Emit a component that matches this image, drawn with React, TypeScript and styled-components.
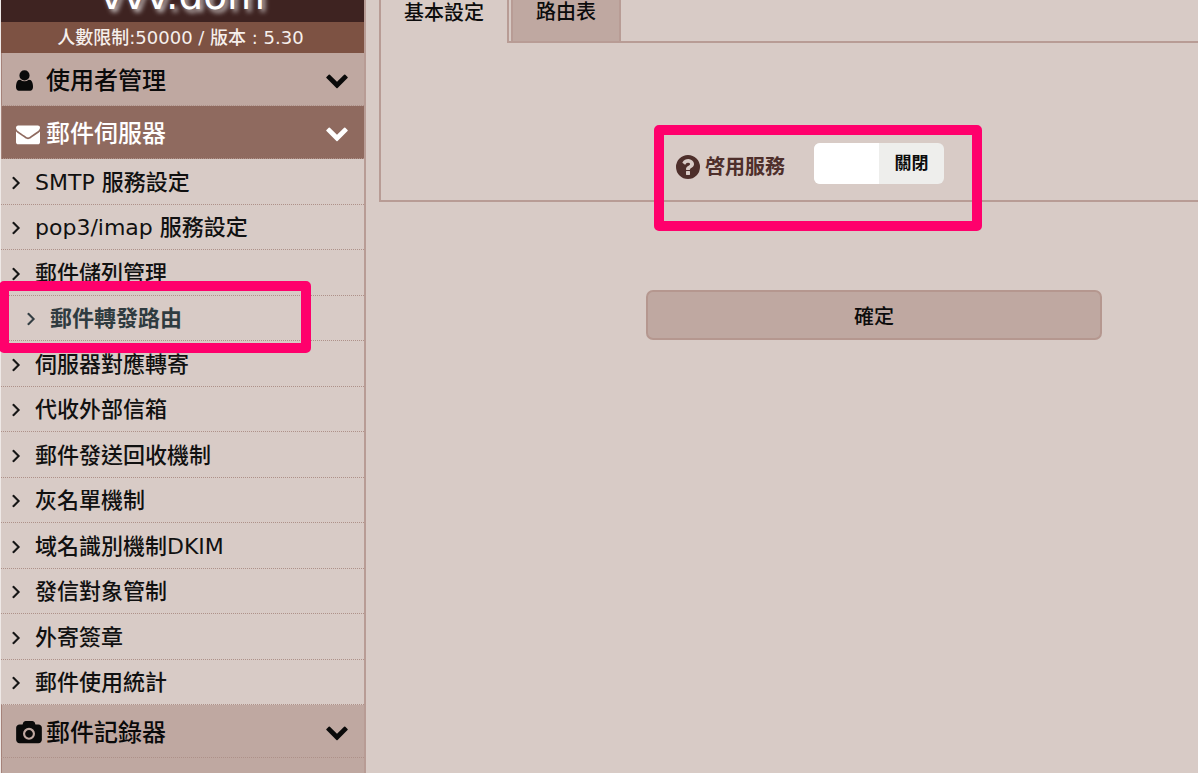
import React from "react";
import styled, { createGlobalStyle, css } from "styled-components";

const c = {
  bg: "#d8cbc6",
  row: "#bfa8a1",
  active: "#8f6a5f",
  line: "#b89c95",
  dots: "#ae9189",
  dark: "#3e2321",
  brown: "#7d5243",
  label: "#4e2f2b",
  mark: "#ff006c",
};

const Global = createGlobalStyle`
  * { box-sizing: border-box; }
  html { overflow: hidden; background: #fff; }
  body { margin: 0; font-family: "DejaVu Sans", "Noto Sans CJK TC", sans-serif; font-weight: 500; color: #0c0c0c; }
  ul { list-style: none; margin: 0; padding: 0; }
  button { font: inherit; color: inherit; cursor: pointer; }
`;

const Page = styled.div`
  display: flex;
  height: calc(100vh - 4px);
  margin-right: 2px;
  background: ${c.bg};
  overflow: hidden;
`;

const Sidebar = styled.nav`
  flex: none;
  width: 366px;
  border-left: 1px solid #efe9e7;
  border-right: 2px solid ${c.line};
`;

const Brand = styled.div`
  height: 22px;
  display: flex;
  align-items: flex-end;
  justify-content: center;
  padding-bottom: 4px;
  overflow: hidden;
  background: ${c.dark};
  color: #fff;
  font-size: 39px;
  line-height: 44px;
  text-shadow: 3px 3px 5px rgba(255, 255, 255, 0.8);
`;

const Limit = styled.div`
  height: 31px;
  padding-right: 4px;
  background: ${c.brown};
  color: #f6efec;
  font-size: 18px;
  line-height: 31px;
  text-align: center;
`;

const GroupButton = styled.button<{ $active?: boolean }>`
  display: flex;
  align-items: center;
  width: 100%;
  height: 53px;
  padding: 3px 15px 0 14px;
  border: 0;
  border-left: 1px solid #a58279;
  border-bottom: 1px dotted ${c.dots};
  background: ${(p) => (p.$active ? c.active : c.row)};
  && { color: ${(p) => (p.$active ? "#fff" : "#0a0a0a")}; font-size: 24px; }
  text-align: left;
`;

const GroupIcon = styled.span`
  display: flex;
  flex: none;
  width: 30px;
`;

const GroupName = styled.span`
  flex: 1;
  line-height: 32px;
`;

const Menu = styled.ul`
  display: flex;
  flex-direction: column;
  min-height: 546px;
`;

const MenuItem = styled.li`
  position: relative;
  display: flex;
  flex: 1;
  border-bottom: 1px dotted ${c.dots};
`;

const MenuLink = styled.a<{ $current?: boolean }>`
  display: flex;
  align-items: center;
  flex: 1;
  gap: 14px;
  padding: 3px 0 0 ${(p) => (p.$current ? 25 : 10)}px;
  color: ${(p) => (p.$current ? "#2f3b40" : "#111")};
  font-size: 22px;
  font-weight: ${(p) => (p.$current ? 700 : 500)};
  line-height: 30px;
  text-decoration: none;
`;

const mark = css`
  position: absolute;
  border: 10px solid ${c.mark};
  border-radius: 5px;
  pointer-events: none;
  z-index: 1;
`;

const MenuMark = styled.span`
  ${mark}
  left: -2px;
  top: -15px;
  width: 312px;
  height: 72px;
`;

const FieldMark = styled.span`
  ${mark}
  left: -22px;
  top: -18px;
  width: 328px;
  height: 106px;
`;

const Main = styled.main`
  flex: 1;
  min-width: 0;
  padding-left: 13px;
`;

const Tabs = styled.div`
  display: flex;
  height: 43px;
  border-left: 2px solid ${c.line};
`;

const Tab = styled.button<{ $selected?: boolean }>`
  padding: 0 23px 17px;
  border: 0 solid ${c.line};
  border-right-width: 2px;
  line-height: 24px;
  && { font-size: 20px; font-weight: 500; }
  ${(p) =>
    p.$selected
      ? css`background: ${c.bg};`
      : css`
          background: ${c.row};
          border-left-width: 2px;
          border-bottom-width: 2px;
        `}
`;

const TabGap = styled.div<{ $fill?: boolean }>`
  flex: ${(p) => (p.$fill ? "1" : "0 0 2px")};
  border-bottom: 2px solid ${c.line};
`;

const Panel = styled.section`
  height: 159px;
  padding: 100px 0 0 295px;
  border: 2px solid ${c.line};
  border-top: 0;
  border-right: 0;
`;

const Field = styled.div`
  position: relative;
  display: flex;
  align-items: center;
  width: 268px;
  height: 41px;
`;

const FieldLabel = styled.label`
  display: flex;
  align-items: center;
  gap: 5px;
  width: 138px;
  padding-top: 6px;
  color: ${c.label};
  font-size: 20px;
  font-weight: 700;
  line-height: 30px;
`;

const Switch = styled.span`
  position: relative;
  display: flex;
  width: 130px;
  height: 41px;
  border-radius: 6px;
  overflow: hidden;
  background: #eeeeec;
`;

const SwitchInput = styled.input`
  position: absolute;
  inset: 0;
  width: 100%;
  height: 100%;
  margin: 0;
  opacity: 0;
  cursor: pointer;
`;

const Knob = styled.span`
  flex: 1;
  background: #fff;
`;

const SwitchState = styled.span`
  flex: 1;
  font-size: 17px;
  font-weight: 700;
  line-height: 40px;
  text-align: center;
`;

const Submit = styled.button`
  display: block;
  width: 100%;
  max-width: 456px;
  height: 50px;
  margin: 88px 0 0 267px;
  border: 2px solid #b5978f;
  border-radius: 7px;
  background: ${c.row};
  && { font-size: 20px; font-weight: 500; }
`;

const paths = {
  user: "M1536 1399q0 109-62.5 187t-150.5 78h-854q-88 0-150.5-78t-62.5-187q0-85 8.5-160.5t31.5-152 58.5-131 94-89 134.5-34.5q131 128 313 128t313-128q76 0 134.5 34.5t94 89 58.5 131 31.5 152 8.5 160.5zm-256-887q0 159-112.5 271.5t-271.5 112.5-271.5-112.5-112.5-271.5 112.5-271.5 271.5-112.5 271.5 112.5 112.5 271.5z",
  envelope:
    "M1792 710v794q0 66-47 113t-113 47h-1472q-66 0-113-47t-47-113v-794q44 49 101 87 362 246 497 345 57 42 92.5 65.5t94.5 48 110 24.5h2q51 0 110-24.5t94.5-48 92.5-65.5q170-123 498-345 57-39 100-87zm0-294q0 79-49 151t-122 123q-376 261-468 325-10 7-42.5 31t-54 38.5-52 32.5-57.5 27-50 9h-2q-23 0-50-9t-57.5-27-52-32.5-54-38.5-42.5-31q-91-64-262-182.5t-205-142.5q-62-42-117-115.5t-55-136.5q0-78 41.5-130t118.5-52h1472q65 0 112.5 47t47.5 113z",
  camera:
    "M960 672q119 0 203.5 84.5t84.5 203.5-84.5 203.5-203.5 84.5-203.5-84.5-84.5-203.5 84.5-203.5 203.5-84.5zm704-416q106 0 181 75t75 181v896q0 106-75 181t-181 75h-1408q-106 0-181-75t-75-181v-896q0-106 75-181t181-75h224l51-136q19-49 69.5-84.5t103.5-35.5h512q53 0 103.5 35.5t69.5 84.5l51 136h224zm-704 1152q185 0 316.5-131.5t131.5-316.5-131.5-316.5-316.5-131.5-316.5 131.5-131.5 316.5 131.5 316.5 316.5 131.5z",
  down: "M1683 808l-742 741q-19 19-45 19t-45-19l-742-741q-19-19-19-45.5t19-45.5l166-165q19-19 45-19t45 19l531 531 531-531q19-19 45-19t45 19l166 165q19 19 19 45.5t-19 45.5z",
  right:
    "M1171 960q0 13-10 23l-466 466q-10 10-23 10t-23-10l-50-50q-10-10-10-23t10-23l393-393-393-393q-10-10-10-23t10-23l50-50q10-10 23-10t23 10l466 466q10 10 10 23z",
  question:
    "M1024 1376v-192q0-14-9-23t-23-9h-192q-14 0-23 9t-9 23v192q0 14 9 23t23 9h192q14 0 23-9t9-23zm256-672q0-88-55.5-163t-138.5-116-170-41q-243 0-371 213-15 24 8 42l132 100q7 6 19 6 16 0 25-12 53-68 86-92 34-24 86-24 48 0 85.5 26t37.5 59q0 38-20 61t-68 45q-63 28-115.5 86.5t-52.5 125.5v36q0 14 9 23t23 9h192q14 0 23-9t9-23q0-19 21.5-49.5t54.5-49.5q32-18 49-28.5t46-35 44.5-48 28-60.5 12.5-81zM896 128a768 768 0 1 1 0 1536a768 768 0 1 1 0-1536z",
};

type IconProps = { name: keyof typeof paths; box: string; w: number; h: number; bold?: boolean };

const Icon = ({ name, box, w, h, bold }: IconProps) => (
  <svg
    width={w}
    height={h}
    viewBox={box}
    fill="currentColor"
    fillRule={name === "question" ? "evenodd" : "nonzero"}
    stroke={bold ? "currentColor" : "none"}
    strokeWidth={bold ? 40 : 0}
    aria-hidden="true"
  >
    <path d={paths[name]} />
  </svg>
);

type GroupProps = { icon: React.ReactNode; name: string; active?: boolean };

const Group = ({ icon, name, active }: GroupProps) => (
  <GroupButton type="button" $active={active} aria-expanded={!!active}>
    <GroupIcon>{icon}</GroupIcon>
    <GroupName>{name}</GroupName>
    <Icon name="down" box="0 128 1792 1792" w={24} h={24} />
  </GroupButton>
);

const items = [
  "SMTP 服務設定",
  "pop3/imap 服務設定",
  "郵件儲列管理",
  "郵件轉發路由",
  "伺服器對應轉寄",
  "代收外部信箱",
  "郵件發送回收機制",
  "灰名單機制",
  "域名識別機制DKIM",
  "發信對象管制",
  "外寄簽章",
  "郵件使用統計",
];
const current = "郵件轉發路由";

export default function App() {
  return (
    <>
      <Global />
      <Page lang="zh-Hant">
        <Sidebar>
          <Brand>vvv.dom</Brand>
          <Limit>人數限制:50000 / 版本 : 5.30</Limit>
          <Group name="使用者管理" icon={<Icon name="user" box="256 128 1280 1536" w={17} h={21} />} />
          <Group name="郵件伺服器" active icon={<Icon name="envelope" box="0 0 1792 1792" w={24} h={24} />} />
          <Menu>
            {items.map((item) => (
              <MenuItem key={item}>
                <MenuLink href="#" $current={item === current}>
                  <Icon name="right" box="550 384 640 1152" w={10} h={14} bold />
                  {item}
                </MenuLink>
                {item === current && <MenuMark />}
              </MenuItem>
            ))}
          </Menu>
          <Group name="郵件記錄器" icon={<Icon name="camera" box="0 0 1920 1792" w={26} h={24} />} />
          <Group name="" icon={null} />
        </Sidebar>
        <Main>
          <Tabs role="tablist">
            <Tab type="button" role="tab" aria-selected="true" $selected>基本設定</Tab>
            <TabGap />
            <Tab type="button" role="tab" aria-selected="false">路由表</Tab>
            <TabGap $fill />
          </Tabs>
          <Panel>
            <Field>
              <FieldLabel htmlFor="service">
                <Icon name="question" box="128 128 1536 1536" w={24} h={24} />
                啓用服務
              </FieldLabel>
              <Switch>
                <Knob />
                <SwitchState>關閉</SwitchState>
                <SwitchInput id="service" type="checkbox" role="switch" />
              </Switch>
              <FieldMark />
            </Field>
          </Panel>
          <Submit type="submit">確定</Submit>
        </Main>
      </Page>
    </>
  );
}
